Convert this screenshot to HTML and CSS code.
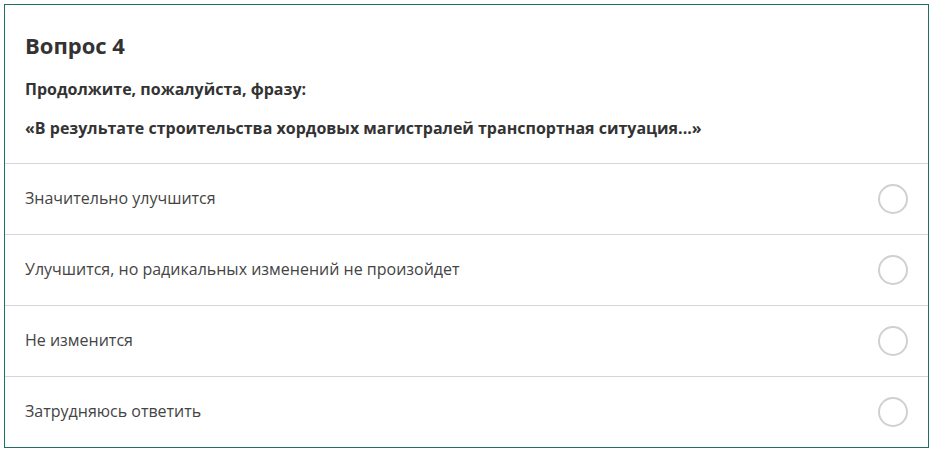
FILE: index.html
```html
<!DOCTYPE html>
<html lang="ru">
<head>
<meta charset="utf-8">
<link rel="stylesheet" href="styles.css">
</head>
<body>
<div class="card">
  <div class="head">
    <h2 class="title">Вопрос 4</h2>
    <p class="sub">Продолжите, пожалуйста, фразу:</p>
    <p class="sub">«В результате строительства хордовых магистралей транспортная ситуация...»</p>
  </div>
  <div class="option"><span class="label">Значительно улучшится</span><span class="radio"></span></div>
  <div class="option"><span class="label">Улучшится, но радикальных изменений не произойдет</span><span class="radio"></span></div>
  <div class="option"><span class="label">Не изменится</span><span class="radio"></span></div>
  <div class="option"><span class="label">Затрудняюсь ответить</span><span class="radio"></span></div>
</div>
</body>
</html>
```
FILE: styles.css
```css
html, body { margin: 0; padding: 0; background: #fff; }
body { padding: 4px; font-family: "Open Sans", "Liberation Sans", sans-serif; color: #444; }
.card {
  box-sizing: border-box;
  width: 925px;
  border: 1px solid #1f6f63;
  background: #fff;
}
.head { padding: 25px 20px 24px 20px; border-bottom: 1px solid #d6d6d6; }
.title { margin: 0 0 18px; font-size: 22px; line-height: 30px; font-weight: 700; color: #333; }
.sub { margin: 0 0 17px; font-size: 16px; line-height: 22px; font-weight: 700; color: #333; }
.sub:last-child { margin-bottom: 0; }
.option {
  display: flex; align-items: center; justify-content: space-between;
  height: 70px; padding: 0 20px; border-bottom: 1px solid #d6d6d6;
  font-size: 16px; line-height: 22px; color: #444;
}
.option:last-child { border-bottom: none; }
.label { position: relative; top: -1px; }
.radio {
  width: 26px; height: 26px; border: 2px solid #d0d0d0; border-radius: 50%;
}
```
